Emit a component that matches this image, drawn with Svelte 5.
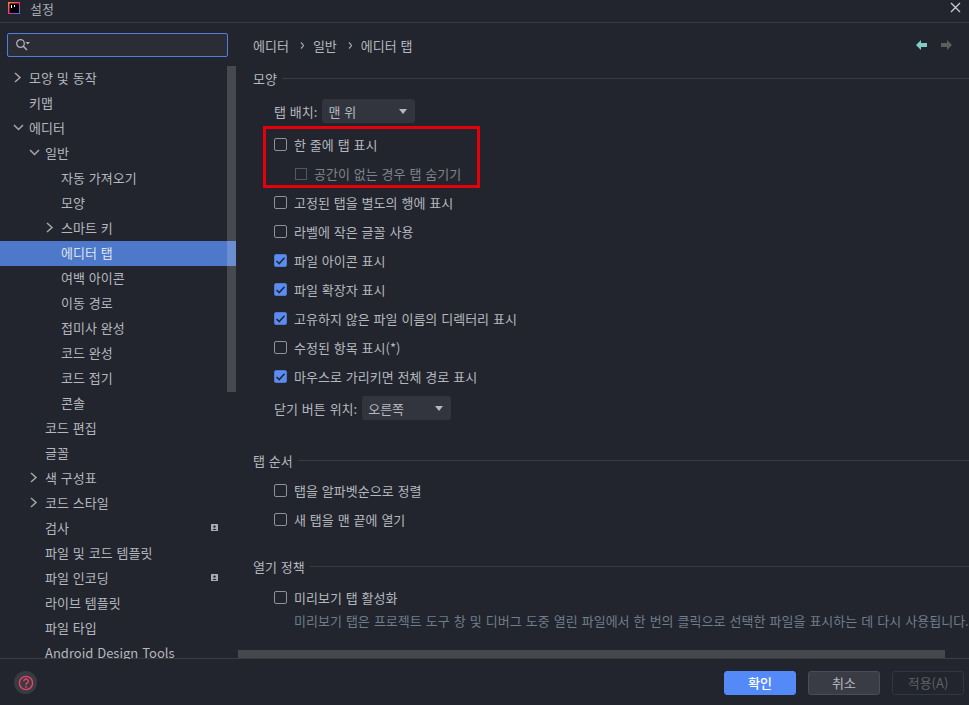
<script>
  const tree = [
    { label: "모양 및 동작", level: 1, arrow: "right" },
    { label: "키맵", level: 1 },
    { label: "에디터", level: 1, arrow: "down" },
    { label: "일반", level: 2, arrow: "down" },
    { label: "자동 가져오기", level: 3 },
    { label: "모양", level: 3 },
    { label: "스마트 키", level: 3, arrow: "right" },
    { label: "에디터 탭", level: 3, selected: true },
    { label: "여백 아이콘", level: 3 },
    { label: "이동 경로", level: 3 },
    { label: "접미사 완성", level: 3 },
    { label: "코드 완성", level: 3 },
    { label: "코드 접기", level: 3 },
    { label: "콘솔", level: 3 },
    { label: "코드 편집", level: 2 },
    { label: "글꼴", level: 2 },
    { label: "색 구성표", level: 2, arrow: "right" },
    { label: "코드 스타일", level: 2, arrow: "right" },
    { label: "검사", level: 2, badge: true },
    { label: "파일 및 코드 템플릿", level: 2 },
    { label: "파일 인코딩", level: 2, badge: true },
    { label: "라이브 템플릿", level: 2 },
    { label: "파일 타입", level: 2 },
    { label: "Android Design Tools", level: 2 }
  ];

  const appearance = [
    { label: "고정된 탭을 별도의 행에 표시" },
    { label: "라벨에 작은 글꼴 사용" },
    { label: "파일 아이콘 표시", checked: true },
    { label: "파일 확장자 표시", checked: true },
    { label: "고유하지 않은 파일 이름의 디렉터리 표시", checked: true },
    { label: "수정된 항목 표시(*)" },
    { label: "마우스로 가리키면 전체 경로 표시", checked: true }
  ];
</script>

{#snippet check(item)}
  <label class="check">
    <span class="box" class:on={item.checked} class:dim={item.dim}>
      {#if item.checked}
        <svg width="11" height="10" viewBox="0 0 11 10"><path d="M1.5 5 L4.2 7.6 L9.5 1.8" fill="none" stroke="#23262e" stroke-width="1.5"/></svg>
      {/if}
    </span>
    <span class:dimtext={item.dim}>{item.label}</span>
  </label>
{/snippet}

{#snippet combo(text, width)}
  <div class="combo" style="width: {width}px;">
    <span>{text}</span>
    <i class="caret"></i>
  </div>
{/snippet}

<div class="dialog">
  <header class="titlebar">
    <svg class="logo" width="13" height="13" viewBox="0 0 13 13">
      <defs>
        <linearGradient id="ij" x1="0" y1="0" x2="1" y2="1">
          <stop offset="0" stop-color="#ff8a1e"/>
          <stop offset="0.5" stop-color="#f5317f"/>
          <stop offset="1" stop-color="#2d7ff9"/>
        </linearGradient>
      </defs>
      <rect width="12" height="12" fill="url(#ij)"/>
      <rect x="1.5" y="1.5" width="9.5" height="9.5" fill="#000"/>
      <rect x="3" y="3" width="1" height="3" fill="#fff"/>
      <rect x="6" y="3" width="1" height="2" fill="#fff"/>
    </svg>
    <span class="title">설정</span>
    <svg class="close" width="11" height="11" viewBox="0 0 11 11"><path d="M1 1 L10 10 M10 1 L1 10" stroke="#c9ccd3" stroke-width="1.3"/></svg>
  </header>

  <div class="body">
    <aside class="sidebar">
      <div class="search">
        <svg width="16" height="14" viewBox="0 0 16 14">
          <circle cx="5.5" cy="5.5" r="3.8" fill="none" stroke="#afb1b3" stroke-width="1.3"/>
          <path d="M8.3 8.3 L12 12" stroke="#afb1b3" stroke-width="1.5"/>
          <path d="M10.5 4 L15 4 L12.75 6.5 Z" fill="#afb1b3"/>
        </svg>
      </div>
      <div class="treewrap">
        <ul class="tree">
          {#each tree as node}
            <li class="node lv{node.level}" class:selected={node.selected}>
              {#if node.arrow === "right"}
                <svg class="arrow" width="9" height="11" viewBox="0 0 9 11"><path d="M2 1 L7 5.5 L2 10" fill="none" stroke="#a4a7ae" stroke-width="1.5"/></svg>
              {:else if node.arrow === "down"}
                <svg class="arrow" width="11" height="9" viewBox="0 0 11 9"><path d="M1 2 L5.5 6.5 L10 2" fill="none" stroke="#a4a7ae" stroke-width="1.5"/></svg>
              {/if}
              <span>{node.label}</span>
              {#if node.badge}
                <svg class="badge" width="7" height="7" viewBox="0 0 7 7">
                  <rect width="7" height="7" rx="0.5" fill="#a9adb4"/>
                  <circle cx="3.5" cy="2.6" r="1.2" fill="#22252d"/>
                  <path d="M1.4 6 Q3.5 3.6 5.6 6 Z" fill="#22252d"/>
                </svg>
              {/if}
            </li>
          {/each}
        </ul>
        <div class="vscroll"></div>
      </div>
    </aside>

    <main class="content">
      <nav class="crumbs">
        <span>에디터</span>
        <svg width="6" height="9" viewBox="0 0 6 9"><path d="M3 1.5 L5.8 4.5 L3 7.5" fill="none" stroke="#a4a7ae" stroke-width="1.1"/></svg>
        <span>일반</span>
        <svg width="6" height="9" viewBox="0 0 6 9"><path d="M3 1.5 L5.8 4.5 L3 7.5" fill="none" stroke="#a4a7ae" stroke-width="1.1"/></svg>
        <span>에디터 탭</span>
        <div class="navarrows">
          <svg width="11" height="10" viewBox="0 0 11 10"><path d="M0 5 L5 0 L5 3 L11 3 L11 7 L5 7 L5 10 Z" fill="#7fcdc4"/></svg>
          <svg width="11" height="10" viewBox="0 0 11 10"><path d="M11 5 L6 0 L6 3 L0 3 L0 7 L6 7 L6 10 Z" fill="#5c5d5f"/></svg>
        </div>
      </nav>

      <div class="scrollarea">
        <section class="group first">
          <h3><span>모양</span></h3>
          <div class="inline top">
            <span>탭 배치:</span>
            {@render combo("맨 위", 93)}
          </div>
          <div class="checks">
            {@render check({ label: "한 줄에 탭 표시" })}
            <div class="nested">{@render check({ label: "공간이 없는 경우 탭 숨기기", dim: true })}</div>
            {#each appearance as item}
              {@render check(item)}
            {/each}
          </div>
          <div class="inline bottom">
            <span>닫기 버튼 위치:</span>
            {@render combo("오른쪽", 89)}
          </div>
        </section>

        <section class="group order">
          <h3><span>탭 순서</span></h3>
          <div class="checks">
            {@render check({ label: "탭을 알파벳순으로 정렬" })}
            {@render check({ label: "새 탭을 맨 끝에 열기" })}
          </div>
        </section>

        <section class="group policy">
          <h3><span>열기 정책</span></h3>
          <div class="checks">
            {@render check({ label: "미리보기 탭 활성화" })}
          </div>
          <p class="hint">미리보기 탭은 프로젝트 도구 창 및 디버그 도중 열린 파일에서 한 번의 클릭으로 선택한 파일을 표시하는 데 다시 사용됩니다.</p>
        </section>

        <div class="marker"></div>
      </div>
      <div class="hscroll"><div class="thumb"></div></div>
    </main>
  </div>

  <footer class="footer">
    <div class="help">
      <svg width="16" height="16" viewBox="0 0 16 16">
        <circle cx="8" cy="8" r="6.6" fill="none" stroke="#e8456b" stroke-width="1.4"/>
        <path d="M5.8 6.3 A2.2 2.2 0 1 1 8.9 8.2 Q8 8.7 8 10" fill="none" stroke="#e8456b" stroke-width="1.4"/>
        <rect x="7.2" y="11" width="1.6" height="1.6" fill="#e8456b"/>
      </svg>
    </div>
    <div class="buttons">
      <button class="btn primary">확인</button>
      <button class="btn">취소</button>
      <button class="btn disabled">적용(A)</button>
    </div>
  </footer>
</div>

<style>
  :global(body) {
    margin: 0;
    background: #22252d;
  }

  .dialog {
    width: 969px;
    height: 705px;
    display: flex;
    flex-direction: column;
    background: #22252d;
    color: #b4b8bf;
    font-family: "Noto Sans CJK KR", "Liberation Sans", sans-serif;
    font-size: 13px;
    word-spacing: 1px;
    overflow: hidden;
  }

  .titlebar {
    height: 22px;
    flex: none;
    display: flex;
    align-items: center;
    padding: 0 8px;
    border-bottom: 1px solid #393b40;
  }

  .logo {
    margin-right: 9px;
    margin-top: -5px;
  }

  .title {
    color: #a9adb4;
    margin-top: -6px;
  }

  .close {
    margin-left: auto;
    margin-top: -7px;
  }

  .body {
    flex: 1;
    min-height: 0;
    display: flex;
  }

  .sidebar {
    width: 237px;
    flex: none;
    display: flex;
    flex-direction: column;
  }

  .search {
    margin: 10px 9px 0 7px;
    height: 22px;
    border: 1px solid #4f7fd6;
    border-radius: 2px;
    background: #2a2d36;
    display: flex;
    align-items: center;
    padding-left: 7px;
  }

  .treewrap {
    position: relative;
    flex: 1;
    min-height: 0;
    margin: 9px 1px 0 0;
    overflow: hidden;
  }

  .tree {
    list-style: none;
    margin: 0;
    padding: 0;
  }

  .node {
    height: 25px;
    box-sizing: border-box;
    padding-bottom: 3px;
    display: flex;
    align-items: center;
    position: relative;
    white-space: nowrap;
  }

  .lv1 { padding-left: 29px; }
  .lv2 { padding-left: 45px; }
  .lv3 { padding-left: 61px; }

  .node.selected {
    background: #4e78c9;
    color: #dfe3ea;
  }

  .arrow {
    position: absolute;
    margin-left: -16px;
  }

  .badge {
    position: absolute;
    right: 18px;
  }

  .vscroll {
    position: absolute;
    right: 0;
    top: 0;
    width: 9px;
    height: 326px;
    background: rgba(255, 255, 255, 0.17);
  }

  .content {
    flex: 1;
    min-width: 0;
    display: flex;
    flex-direction: column;
  }

  .crumbs {
    height: 44px;
    margin-bottom: 2px;
    flex: none;
    display: flex;
    align-items: center;
    gap: 9px;
    padding: 0 17px 0 16px;
    box-sizing: border-box;
  }

  .navarrows {
    margin-left: auto;
    display: flex;
    gap: 14px;
  }

  .scrollarea {
    flex: 1;
    min-height: 0;
    overflow: hidden;
    padding-left: 16px;
  }

  h3 {
    margin: 0;
    font-weight: 400;
    font-size: inherit;
    height: 18px;
    display: flex;
    align-items: center;
    gap: 5px;
  }

  h3::after {
    content: "";
    flex: 1;
    height: 1px;
    background: #393b40;
  }

  .inline {
    display: flex;
    align-items: center;
    gap: 5px;
    padding-left: 21px;
    height: 24px;
  }

  .inline.top {
    margin-top: 12px;
    margin-bottom: 7px;
  }

  .inline.bottom {
    margin-top: 5px;
  }

  .combo {
    height: 24px;
    box-sizing: border-box;
    background: #32353e;
    border-radius: 3px;
    display: flex;
    align-items: center;
    justify-content: space-between;
    padding: 0 8px 0 6px;
  }

  .caret {
    width: 0;
    height: 0;
    border-left: 4px solid transparent;
    border-right: 4px solid transparent;
    border-top: 5px solid #b4b8bf;
  }

  .checks {
    display: flex;
    flex-direction: column;
    padding-left: 21px;
  }

  .check {
    height: 29px;
    display: flex;
    align-items: center;
    gap: 7px;
    white-space: nowrap;
  }

  .nested {
    padding-left: 21px;
  }

  .box {
    width: 13px;
    height: 13px;
    flex: none;
    box-sizing: border-box;
    border: 1.5px solid #8f9299;
    border-radius: 2px;
    display: flex;
    align-items: center;
    justify-content: center;
  }

  .box.dim {
    width: 12px;
    height: 12px;
    border: 1px solid #55585f;
    border-radius: 0;
  }

  .box.on {
    background: #598cf5;
    border-color: #5279c4;
  }

  .dimtext {
    color: #80838a;
  }

  .group.order {
    margin-top: 31px;
  }

  .order .checks {
    margin-top: 7px;
  }

  .group.policy {
    margin-top: 23px;
  }

  .policy .checks {
    margin-top: 8px;
  }

  .hint {
    margin: -1px 0 0 41px;
    color: #6f7d8c;
    word-spacing: 1.15px;
    white-space: nowrap;
  }

  .hscroll {
    height: 9px;
    flex: none;
    margin-left: 1px;
  }

  .thumb {
    width: 707px;
    height: 8px;
    background: #45484d;
  }

  .footer {
    height: 45px;
    box-sizing: content-box;
    flex: none;
    border-top: 1px solid #393b40;
    display: flex;
    align-items: center;
    justify-content: space-between;
    padding: 1px 5px 0 14px;
    margin-top: -1px;
  }

  .help {
    width: 23px;
    height: 23px;
    border-radius: 50%;
    background: #393b40;
    display: flex;
    align-items: center;
    justify-content: center;
  }

  .buttons {
    display: flex;
    gap: 12px;
  }

  .btn {
    width: 72px;
    height: 24px;
    box-sizing: border-box;
    border: 1px solid #4a4d55;
    border-radius: 3px;
    background: #393c45;
    color: #b4b8bf;
    font: inherit;
    padding: 0;
  }

  .btn.primary {
    background: #548af7;
    border-color: #548af7;
    color: #fff;
    font-weight: 500;
  }

  .btn.disabled {
    background: transparent;
    border-color: #33363e;
    color: #5f6268;
  }

  .marker {
    position: fixed;
    left: 263px;
    top: 126px;
    width: 217px;
    height: 62px;
    box-sizing: border-box;
    border: 3px solid #e6000a;
    pointer-events: none;
  }
</style>
